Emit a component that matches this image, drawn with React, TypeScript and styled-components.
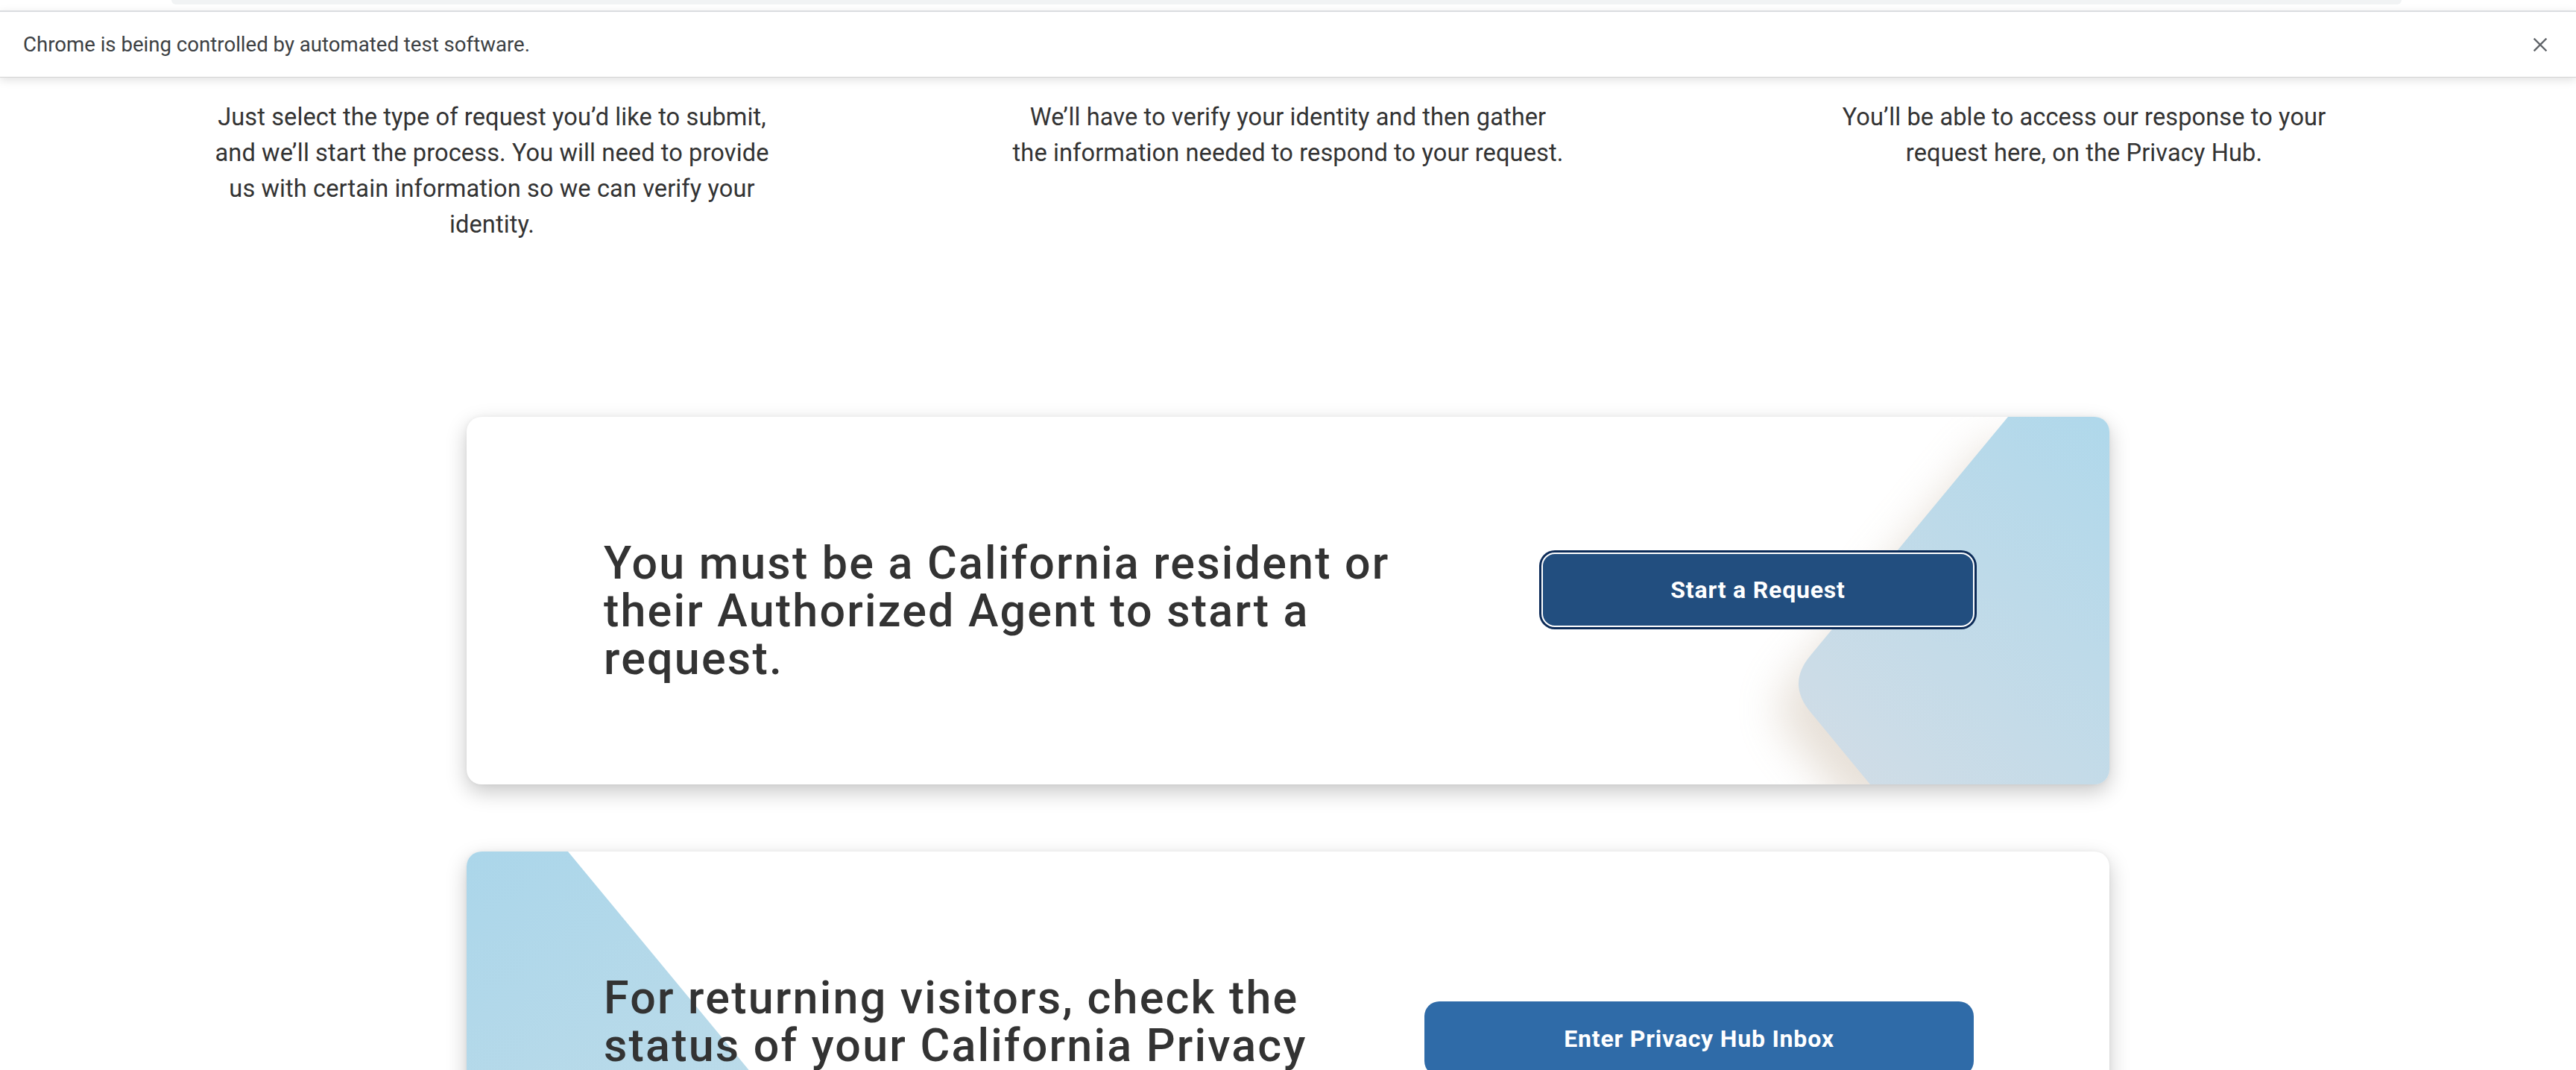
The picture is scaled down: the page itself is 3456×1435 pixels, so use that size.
import React from "react";
import styled, { createGlobalStyle } from "styled-components";

const GlobalStyle = createGlobalStyle`
  html, body {
    margin: 0;
    padding: 0;
    background: #ffffff;
    overflow: hidden;
  }
  body {
    font-family: Roboto, "Liberation Sans", Arial, sans-serif;
    -webkit-font-smoothing: antialiased;
  }
`;

const Page = styled.div`
  height: 1435px;
  overflow: hidden;
  background: #ffffff;
  display: flex;
  flex-direction: column;
`;

const BrowserStrip = styled.div`
  flex: none;
  height: 14px;
  background: #ffffff;
`;

const OmniboxEdge = styled.div`
  margin-left: 230px;
  width: 2992px;
  height: 6px;
  background: #f1f3f4;
  border-radius: 0 0 20px 20px;
`;

const InfoBar = styled.div`
  position: relative;
  z-index: 2;
  flex: none;
  height: 87px;
  border-top: 2px solid #dadce0;
  background: #ffffff;
  display: flex;
  align-items: center;
  justify-content: space-between;
  padding: 0 39px 0 31px;
  box-shadow: 0 1px 0 #d4d4d4, 0 4px 12px rgba(0, 0, 0, 0.13);
`;

const InfoText = styled.span`
  font-family: Roboto, "Liberation Sans", Arial, sans-serif;
  font-size: 27.6px;
  color: #3c4043;
`;

const CloseButton = styled.button`
  border: 0;
  padding: 0;
  background: none;
  width: 18px;
  height: 18px;
  display: flex;
  color: #5f6368;
`;

const Content = styled.main`
  flex: 1;
  padding-top: 30px;
  display: flex;
  flex-direction: column;
  align-items: center;
`;

const Steps = styled.section`
  display: grid;
  grid-template-columns: repeat(3, 1068px);
`;

const StepText = styled.p`
  margin: 0;
  text-align: center;
  font-family: Roboto, "Liberation Sans", Arial, sans-serif;
  font-size: 32.6px;
  line-height: 48px;
  letter-spacing: 0.1px;
  color: #333333;
  white-space: nowrap;
`;

const Card = styled.div<{ $gap: number }>`
  position: relative;
  flex: none;
  box-sizing: border-box;
  width: 2204px;
  margin-top: ${(p) => p.$gap}px;
  padding: 164px 178px 137px 184px;
  background: #ffffff;
  border-radius: 20px;
  box-shadow: 0 10px 28px rgba(0, 0, 0, 0.22), 0 0 6px rgba(0, 0, 0, 0.05);
  overflow: hidden;
  display: flex;
  justify-content: space-between;
  align-items: flex-start;
`;

const Decoration = styled.svg`
  position: absolute;
  top: 0;
  left: 0;
  pointer-events: none;
`;

const CardTitle = styled.h2`
  position: relative;
  z-index: 1;
  margin: 0;
  font-family: Roboto, "Liberation Sans", Arial, sans-serif;
  font-weight: 500;
  font-size: 61px;
  line-height: 64px;
  letter-spacing: 2.2px;
  color: #333333;
  white-space: nowrap;
`;

const ActionButton = styled.button<{
  $variant: "primary" | "secondary";
  $offset: number;
  $width: number;
}>`
  position: relative;
  z-index: 1;
  flex: none;
  box-sizing: border-box;
  width: ${(p) => p.$width}px;
  height: 100px;
  margin-top: ${(p) => p.$offset}px;
  margin-right: ${(p) => (p.$variant === "primary" ? 3 : 4)}px;
  border-radius: ${(p) => (p.$variant === "primary" ? 18 : 20)}px;
  border: ${(p) => (p.$variant === "primary" ? "2px solid #ffffff" : "0")};
  box-shadow: ${(p) => (p.$variant === "primary" ? "0 0 0 3px #0c2b58" : "none")};
  background: ${(p) => (p.$variant === "primary" ? "#224e7f" : "#2f6ba8")};
  color: #ffffff;
  font-family: Roboto, "Liberation Sans", Arial, sans-serif;
  font-weight: 700;
  font-size: 32px;
  letter-spacing: 0.8px;
  cursor: pointer;
`;

const requestShape =
  "M 2068 0 L 1803 320 Q 1771 358 1803 396 L 1883 493 L 2204 493 L 2204 0 Z";
const inboxShape =
  "M 136 0 L 401 320 Q 433 358 401 396 L 321 493 L 0 493 L 0 0 Z";

function RequestDecoration() {
  return (
    <Decoration width={2204} height={493} viewBox="0 0 2204 493" aria-hidden="true">
      <defs>
        <linearGradient
          id="reqFill"
          x1="1771"
          y1="493"
          x2="2204"
          y2="0"
          gradientUnits="userSpaceOnUse"
        >
          <stop offset="0" stopColor="#d3dde6" />
          <stop offset="1" stopColor="#afd8eb" />
        </linearGradient>
        <filter id="reqWarm" x="-30%" y="-30%" width="160%" height="160%">
          <feGaussianBlur stdDeviation="28" />
        </filter>
      </defs>
      <path
        d={requestShape}
        fill="#c4b29e"
        opacity="0.4"
        transform="translate(-26 34)"
        filter="url(#reqWarm)"
      />
      <path d={requestShape} fill="url(#reqFill)" />
    </Decoration>
  );
}

function InboxDecoration() {
  return (
    <Decoration width={2204} height={493} viewBox="0 0 2204 493" aria-hidden="true">
      <defs>
        <linearGradient
          id="inboxFill"
          x1="0"
          y1="0"
          x2="300"
          y2="493"
          gradientUnits="userSpaceOnUse"
        >
          <stop offset="0" stopColor="#abd6ea" />
          <stop offset="1" stopColor="#bfdce9" />
        </linearGradient>
      </defs>
      <path d={inboxShape} fill="url(#inboxFill)" />
    </Decoration>
  );
}

export default function App() {
  return (
    <>
      <GlobalStyle />
      <Page>
        <BrowserStrip>
          <OmniboxEdge />
        </BrowserStrip>
        <InfoBar>
          <InfoText>Chrome is being controlled by automated test software.</InfoText>
          <CloseButton aria-label="Close">
            <svg width="18" height="18" viewBox="0 0 18 18">
              <path
                d="M1.5 1.5 L16.5 16.5 M16.5 1.5 L1.5 16.5"
                stroke="currentColor"
                strokeWidth="2.4"
                strokeLinecap="square"
              />
            </svg>
          </CloseButton>
        </InfoBar>
        <Content>
          <Steps>
            <StepText>
              Just select the type of request you’d like to submit,
              <br />
              and we’ll start the process. You will need to provide
              <br />
              us with certain information so we can verify your
              <br />
              identity.
            </StepText>
            <StepText>
              We’ll have to verify your identity and then gather
              <br />
              the information needed to respond to your request.
            </StepText>
            <StepText>
              You’ll be able to access our response to your
              <br />
              request here, on the Privacy Hub.
            </StepText>
          </Steps>

          <Card $gap={234}>
            <RequestDecoration />
            <CardTitle>
              You must be a California resident or
              <br />
              their Authorized Agent to start a
              <br />
              request.
            </CardTitle>
            <ActionButton $variant="primary" $offset={18} $width={581}>
              Start a Request
            </ActionButton>
          </Card>

          <Card $gap={90}>
            <InboxDecoration />
            <CardTitle>
              For returning visitors, check the
              <br />
              status of your California Privacy
              <br />
              Request.
            </CardTitle>
            <ActionButton $variant="secondary" $offset={37} $width={737}>
              Enter Privacy Hub Inbox
            </ActionButton>
          </Card>
        </Content>
      </Page>
    </>
  );
}
